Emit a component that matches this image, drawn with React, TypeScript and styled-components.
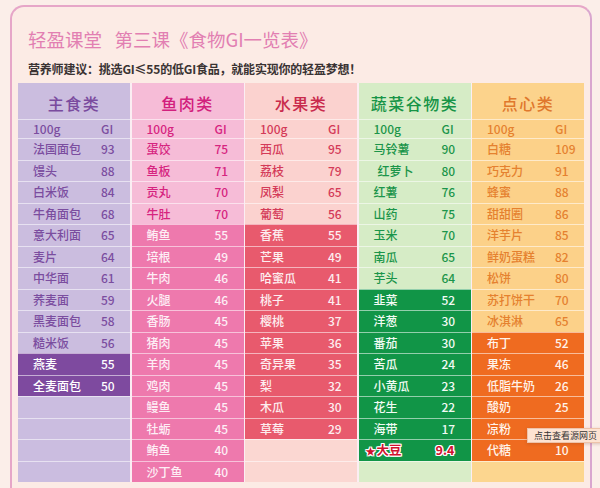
import React from "react";
import styled, { createGlobalStyle } from "styled-components";

const GlobalStyle = createGlobalStyle`
  html, body { margin: 0; padding: 0; background: #fbeee9; }
  body { font-family: "Noto Sans CJK SC", "Noto Sans", sans-serif; }
`;

type Palette = {
  head: string;
  headText: string;
  light: string;
  lightText: string;
  dark: string;
  darkText: string;
  empty: string;
};

type Tone = "light" | "dark" | "empty";
type Item = { name: string; gi: string; tone: Tone; indent?: boolean; star?: boolean };
type Group = { title: string; palette: Palette; items: Item[] };

const L = (name: string, gi: string, extra: Partial<Item> = {}): Item => ({ name, gi, tone: "light", ...extra });
const D = (name: string, gi: string, extra: Partial<Item> = {}): Item => ({ name, gi, tone: "dark", ...extra });
const E = (): Item => ({ name: "", gi: "", tone: "empty" });

const groups: Group[] = [
  {
    title: "主食类",
    palette: {
      head: "#cbbddf", headText: "#7a4b9e", light: "#cbbddf", lightText: "#7b4d9f",
      dark: "#7e4a9f", darkText: "#ffffff", empty: "#cbbde0",
    },
    items: [
      L("法国面包", "93"), L("馒头", "88"), L("白米饭", "84"), L("牛角面包", "68"),
      L("意大利面", "65"), L("麦片", "64"), L("中华面", "61"), L("荞麦面", "59"),
      L("黑麦面包", "58"), L("糙米饭", "56"), D("燕麦", "55"), D("全麦面包", "50"),
      E(), E(), E(), E(),
    ],
  },
  {
    title: "鱼肉类",
    palette: {
      head: "#f6bcd7", headText: "#d2207d", light: "#f6bcd7", lightText: "#d6247f",
      dark: "#ee79ad", darkText: "#fdeef5", empty: "#f6bcd7",
    },
    items: [
      L("蛋饺", "75"), L("鱼板", "71"), L("贡丸", "70"), L("牛肚", "70"),
      D("鲔鱼", "55"), D("培根", "49"), D("牛肉", "46"), D("火腿", "46"),
      D("香肠", "45"), D("猪肉", "45"), D("羊肉", "45"), D("鸡肉", "45"),
      D("鳗鱼", "45"), D("牡蛎", "45"), D("鲔鱼", "40"), D("沙丁鱼", "40"),
    ],
  },
  {
    title: "水果类",
    palette: {
      head: "#fbd2cf", headText: "#c92a4c", light: "#fbd2cf", lightText: "#d43a58",
      dark: "#e85a6d", darkText: "#fdeef0", empty: "#fbd7d2",
    },
    items: [
      L("西瓜", "95"), L("荔枝", "79"), L("凤梨", "65"), L("葡萄", "56"),
      D("香蕉", "55"), D("芒果", "49"), D("哈蜜瓜", "41"), D("桃子", "41"),
      D("樱桃", "37"), D("苹果", "36"), D("奇异果", "35"), D("梨", "32"),
      D("木瓜", "30"), D("草莓", "29"), E(), E(),
    ],
  },
  {
    title: "蔬菜谷物类",
    palette: {
      head: "#d6ecc6", headText: "#179446", light: "#d6ecc6", lightText: "#1b954a",
      dark: "#119547", darkText: "#f2fbf4", empty: "#d9edc8",
    },
    items: [
      L("马铃薯", "90"), L("红萝卜", "80", { indent: true }), L("红薯", "76"), L("山药", "75"),
      L("玉米", "70"), L("南瓜", "65"), L("芋头", "64"),
      D("韭菜", "52"), D("洋葱", "30"), D("番茄", "30"), D("苦瓜", "24"),
      D("小黄瓜", "23"), D("花生", "22"), D("海带", "17"), D("大豆", "9.4", { star: true }),
      E(),
    ],
  },
  {
    title: "点心类",
    palette: {
      head: "#fcd38c", headText: "#e0782c", light: "#fcd189", lightText: "#e5812f",
      dark: "#ef6b20", darkText: "#fff3ea", empty: "#fcd68f",
    },
    items: [
      L("白糖", "109"), L("巧克力", "91"), L("蜂蜜", "88"), L("甜甜圈", "86"),
      L("洋芋片", "85"), L("鲜奶蛋糕", "82"), L("松饼", "80"), L("苏打饼干", "70"),
      L("冰淇淋", "65"),
      D("布丁", "52"), D("果冻", "46"), D("低脂牛奶", "26"), D("酸奶", "25"),
      D("凉粉", ""), D("代糖", "10"), E(),
    ],
  },
];

const Page = styled.div`
  position: relative;
  width: 600px;
  height: 488px;
  overflow: hidden;
  box-sizing: border-box;
  padding: 5px 8px 0 10px;
`;

const Frame = styled.div`
  height: 100%;
  box-sizing: border-box;
  border: 2px solid #e6a6c8;
  border-right-color: #d9a6cf;
  border-bottom: none;
  border-radius: 14px 14px 0 0;
  background: #fcebe5;
  padding: 0 6px;
`;

const Header = styled.header`
  padding: 19px 0 0 10px;
`;

const Title = styled.h1`
  margin: 0;
  font-size: 18.5px;
  line-height: 26px;
  font-weight: 400;
  color: #e27fb2;
  white-space: pre;
`;

const Subtitle = styled.p`
  margin: 9px 0 0;
  font-size: 12px;
  line-height: 16px;
  font-weight: 700;
  color: #3a3333;
  letter-spacing: -0.2px;
`;

const Table = styled.div`
  margin-top: 6px;
  display: grid;
  grid-template-columns: repeat(5, 112px);
  column-gap: 1.5px;
  background: #fbeef3;
`;

const Column = styled.div`
  display: flex;
  flex-direction: column;
`;

const HeadCell = styled.div<{ $bg: string; $fg: string }>`
  height: 36px;
  box-sizing: border-box;
  padding-top: 4px;
  display: flex;
  align-items: center;
  justify-content: center;
  background: ${(p) => p.$bg};
  color: ${(p) => p.$fg};
  font-size: 16px;
  font-weight: 500;
  letter-spacing: 1.5px;
`;

const Row = styled.div<{ $bg: string; $fg: string; $h: number }>`
  height: ${(p) => p.$h}px;
  box-sizing: border-box;
  border-top: 1px solid rgba(255, 255, 255, 0.55);
  display: grid;
  grid-template-columns: 68px 1fr;
  align-items: center;
  padding-left: 15px;
  background: ${(p) => p.$bg};
  color: ${(p) => p.$fg};
  font-size: 12px;
  font-weight: 500;
  line-height: 1;
`;

const Name = styled.span<{ $indent?: boolean }>`
  padding-left: ${(p) => (p.$indent ? 4 : 0)}px;
  white-space: nowrap;
`;

const Value = styled.span`
  white-space: nowrap;
`;

const StarName = styled.span`
  margin-left: -8px;
  color: #d0122f;
  font-weight: 700;
  font-size: 12.5px;
  white-space: nowrap;
  text-shadow: 1px 0 0 #fff, -1px 0 0 #fff, 0 1px 0 #fff, 0 -1px 0 #fff,
    1px 1px 0 #fff, -1px -1px 0 #fff, 1px -1px 0 #fff, -1px 1px 0 #fff;
`;

const StarGlyph = styled.span`
  font-size: 10px;
  margin-right: 1px;
`;

const StarValue = styled(StarName)`
  margin-left: -6px;
`;

const Tooltip = styled.div`
  position: absolute;
  left: 527px;
  top: 428px;
  height: 15px;
  box-sizing: border-box;
  padding: 0 4px 0 6px;
  display: flex;
  align-items: center;
  background: #fde3d2;
  border: 1px solid #eec3aa;
  box-shadow: 0 1px 3px rgba(120, 60, 30, 0.25);
  color: #333;
  font-size: 9px;
  white-space: nowrap;
`;

function GroupColumn({ group }: { group: Group }) {
  const p = group.palette;
  return (
    <Column>
      <HeadCell $bg={p.head} $fg={p.headText}>{group.title}</HeadCell>
      <Row $bg={p.light} $fg={p.lightText} $h={19}>
        <Name>100g</Name>
        <Value>GI</Value>
      </Row>
      {group.items.map((it, i) => {
        const bg = it.tone === "dark" ? p.dark : it.tone === "empty" ? p.empty : p.light;
        const fg = it.tone === "dark" ? p.darkText : p.lightText;
        return (
          <Row key={i} $bg={bg} $fg={fg} $h={21.5}>
            {it.star ? (
              <>
                <StarName>
                  <StarGlyph>★</StarGlyph>
                  {it.name}
                </StarName>
                <StarValue>{it.gi}</StarValue>
              </>
            ) : (
              <>
                <Name $indent={it.indent}>{it.name}</Name>
                <Value>{it.gi}</Value>
              </>
            )}
          </Row>
        );
      })}
    </Column>
  );
}

export default function App() {
  return (
    <>
      <GlobalStyle />
      <Page>
        <Frame>
          <Header>
            <Title>{"轻盈课堂   第三课《食物GI一览表》"}</Title>
            <Subtitle>营养师建议：挑选GI≤55的低GI食品，就能实现你的轻盈梦想！</Subtitle>
          </Header>
          <Table>
            {groups.map((g) => (
              <GroupColumn key={g.title} group={g} />
            ))}
          </Table>
        </Frame>
        <Tooltip>点击查看源网页</Tooltip>
      </Page>
    </>
  );
}
